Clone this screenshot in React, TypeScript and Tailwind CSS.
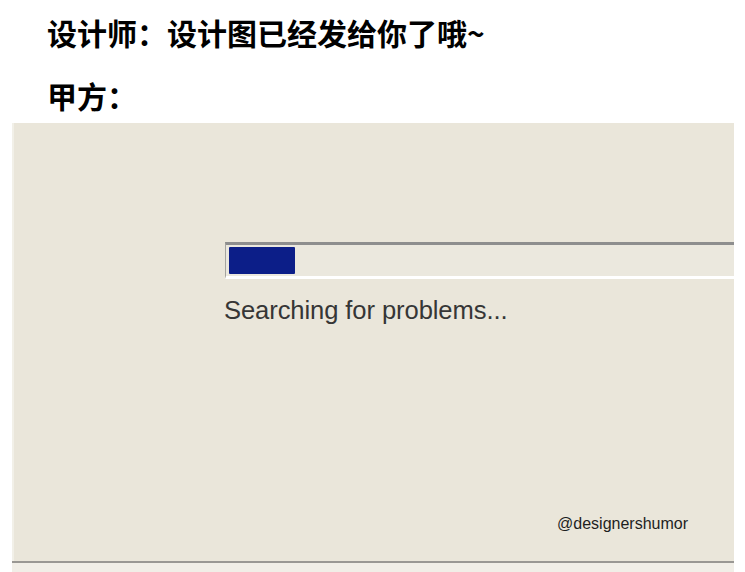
export default function App() {
    return (
        <div className="w-[745px] h-[572px] bg-white overflow-hidden flex flex-col">
            <div
                className="mt-[14px] h-[36px] pl-[47px] text-[30px] leading-[36px] font-bold text-black"
                style={{ fontFamily: '"Noto Sans CJK SC", "Noto Sans", sans-serif' }}
            >
                设计师：设计图已经发给你了哦~
            </div>
            <div
                className="mt-[27px] h-[36px] pl-[47px] text-[30px] leading-[36px] font-bold text-black"
                style={{ fontFamily: '"Noto Sans CJK SC", "Noto Sans", sans-serif' }}
            >
                甲方：
            </div>

            <div className="ml-[12px] w-[722px] mt-[10px] flex flex-col">
                <div className="h-[438px] bg-[#eae6da] border-l-2 border-[#f2f0e8] flex flex-col pl-[210px] pt-[119px]">
                    <div className="ml-[1px] border-t-[3px] border-b-[3px] border-l border-t-[#8e8e8e] border-l-[#a4a4a0] border-b-white h-[37px] bg-[#ebe8de]">
                        <div className="ml-[3px] mt-[2px] w-[66px] h-[27px] bg-[#0c1e88] rounded-[1px]" />
                    </div>
                    <div
                        className="mt-[16px] text-[25.6px] leading-[30px] text-[#363636] tracking-[-0.1px]"
                        style={{ fontFamily: '"Liberation Sans", Arial, sans-serif' }}
                    >
                        Searching for problems...
                    </div>
                    <div className="flex-1" />
                    <div className="flex justify-end pr-[46px] pb-[27px]">
                        <span
                            className="text-[16px] leading-[20px] text-[#1e1e1e]"
                            style={{ fontFamily: '"Liberation Sans", Arial, sans-serif' }}
                        >
                            @designershumor
                        </span>
                    </div>
                </div>
                <div className="h-[2px] bg-[#9a9894]" />
                <div className="h-[12px] bg-[#f1eee7]" />
            </div>
        </div>
    )
}
